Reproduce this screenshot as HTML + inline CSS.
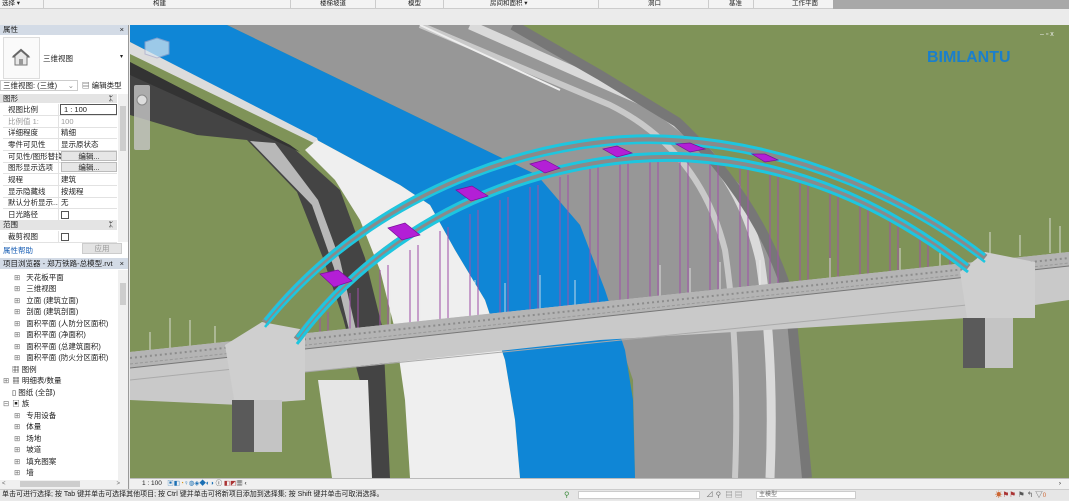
<!DOCTYPE html><html><head><meta charset="utf-8"><style>
*{margin:0;padding:0;box-sizing:border-box}
body{width:1069px;height:500px;overflow:hidden;background:#e9e9e9;font-family:"Liberation Sans","Noto Sans CJK SC",sans-serif;font-size:7.5px;color:#222;position:relative}
.a{position:absolute;white-space:nowrap}
.row{position:absolute;left:3px;width:114px;height:11.6px;border-bottom:1px solid #e2e2e2;line-height:11px}
.row span{position:absolute;left:5px}.row b{font-weight:normal;position:absolute;left:58px}
.row:after{content:"";position:absolute;left:55px;top:0;bottom:0;border-left:1px solid #e2e2e2}
.tr{position:absolute;left:14px;line-height:11px}
.tr i{font-style:normal;color:#777;margin-right:6px}
</style></head><body>
<div class="a" style="left:0;top:0;width:833px;height:9px;background:#f3f3f3;border-bottom:1px solid #ccc"></div>
<div class="a" style="left:833px;top:0;width:236px;height:9px;background:#a8a8a8"></div>
<div class="a" style="left:2px;top:0;font-size:6.5px;line-height:8px">选择 ▾</div>
<div class="a" style="left:153px;top:0;font-size:6.5px;line-height:8px">构建</div>
<div class="a" style="left:320px;top:0;font-size:6.5px;line-height:8px">楼梯坡道</div>
<div class="a" style="left:408px;top:0;font-size:6.5px;line-height:8px">模型</div>
<div class="a" style="left:490px;top:0;font-size:6.5px;line-height:8px">房间和面积 ▾</div>
<div class="a" style="left:648px;top:0;font-size:6.5px;line-height:8px">洞口</div>
<div class="a" style="left:729px;top:0;font-size:6.5px;line-height:8px">基准</div>
<div class="a" style="left:792px;top:0;font-size:6.5px;line-height:8px">工作平面</div>
<div class="a" style="left:43px;top:0;width:1px;height:9px;background:#ccc"></div>
<div class="a" style="left:290px;top:0;width:1px;height:9px;background:#ccc"></div>
<div class="a" style="left:375px;top:0;width:1px;height:9px;background:#ccc"></div>
<div class="a" style="left:443px;top:0;width:1px;height:9px;background:#ccc"></div>
<div class="a" style="left:598px;top:0;width:1px;height:9px;background:#ccc"></div>
<div class="a" style="left:708px;top:0;width:1px;height:9px;background:#ccc"></div>
<div class="a" style="left:753px;top:0;width:1px;height:9px;background:#ccc"></div>
<div class="a" style="left:0;top:9px;width:1069px;height:16px;background:#ebebeb"></div>

<div class="a" style="left:0;top:25px;width:129px;height:464px;background:#fff;border-right:1px solid #999"></div>
<div class="a" style="left:0;top:25px;width:128px;height:10px;background:#d3dbe6;line-height:10px;padding-left:3px">属性<span style="position:absolute;right:4px">×</span></div>
<div class="a" style="left:3px;top:37px;width:37px;height:42px;border:1px solid #ddd;background:#fafafa"></div>
<svg class="a" style="left:10px;top:46px" width="22" height="22" viewBox="0 0 22 22"><path d="M3 11 L11 4 L19 11 L17 11 L17 19 L5 19 L5 11 Z" fill="#e8e8e8" stroke="#777"/><path d="M3 11 L11 4 L19 11" fill="none" stroke="#666" stroke-width="2"/><rect x="9" y="13" width="4" height="6" fill="#999"/></svg>
<div class="a" style="left:43px;top:53px">三维视图</div>
<div class="a" style="left:120px;top:53px;font-size:6px">▾</div>
<div class="a" style="left:0;top:80px;width:78px;height:11px;border:1px solid #ccc;line-height:10px;padding-left:2px">三维视图: (三维)<span style="position:absolute;right:3px;color:#888">⌄</span></div>
<div class="a" style="left:82px;top:80px;line-height:11px">▤ 编辑类型</div>
<div class="a" style="left:0;top:94px;width:117px;height:9px;background:#e4e4e4;line-height:9px;padding-left:3px">图形<span style="position:absolute;right:4px">ᛯ</span></div>
<div class="row" style="top:104px"><span>视图比例</span><b style="border:1px solid #555;left:57px;width:57px;top:0;height:11px;padding-left:3px;line-height:9px">1 : 100</b></div>
<div class="row" style="top:116px;color:#999"><span>比例值 1:</span><b>100</b></div>
<div class="row" style="top:127px"><span>详细程度</span><b>精细</b></div>
<div class="row" style="top:139px"><span>零件可见性</span><b>显示原状态</b></div>
<div class="row" style="top:151px"><span>可见性/图形替换</span><b style="background:#e6e6e6;width:56px;text-align:center;border:1px solid #bbb;height:10px;line-height:9px">编辑...</b></div>
<div class="row" style="top:162px"><span>图形显示选项</span><b style="background:#e6e6e6;width:56px;text-align:center;border:1px solid #bbb;height:10px;line-height:9px">编辑...</b></div>
<div class="row" style="top:174px"><span>规程</span><b>建筑</b></div>
<div class="row" style="top:186px"><span>显示隐藏线</span><b>按规程</b></div>
<div class="row" style="top:197px"><span>默认分析显示...</span><b>无</b></div>
<div class="row" style="top:209px"><span>日光路径</span><b style="width:8px;height:8px;border:1px solid #555;top:2px"></b></div>
<div class="a" style="left:0;top:220px;width:117px;height:10px;background:#e4e4e4;line-height:10px;padding-left:3px">范围<span style="position:absolute;right:4px">ᛯ</span></div>
<div class="row" style="top:231px"><span>裁剪视图</span><b style="width:8px;height:8px;border:1px solid #555;top:2px"></b></div>
<div class="a" style="left:118px;top:94px;width:10px;height:148px;background:#f0f0f0"></div>
<div class="a" style="left:120px;top:106px;width:6px;height:45px;background:#cdcdcd"></div>
<div class="a" style="left:3px;top:245px;color:#1a5fb4">属性帮助</div>
<div class="a" style="left:82px;top:243px;width:40px;height:11px;background:#e3e3e3;border:1px solid #ccc;color:#999;text-align:center;line-height:10px">应用</div>
<div class="a" style="left:0;top:258px;width:128px;height:11px;background:#d3dbe6;line-height:11px;padding-left:3px">项目浏览器 - 郑万铁路-总模型.rvt<span style="position:absolute;right:4px">×</span></div>
<div class="tr" style="top:272px"><i>⊞</i>天花板平面</div>
<div class="tr" style="top:283px"><i>⊞</i>三维视图</div>
<div class="tr" style="top:295px"><i>⊞</i>立面 (建筑立面)</div>
<div class="tr" style="top:306px"><i>⊞</i>剖面 (建筑剖面)</div>
<div class="tr" style="top:318px"><i>⊞</i>面积平面 (人防分区面积)</div>
<div class="tr" style="top:329px"><i>⊞</i>面积平面 (净面积)</div>
<div class="tr" style="top:341px"><i>⊞</i>面积平面 (总建筑面积)</div>
<div class="tr" style="top:352px"><i>⊞</i>面积平面 (防火分区面积)</div>
<div class="tr" style="top:364px;left:12px">▦ 图例</div>
<div class="tr" style="top:375px;left:3px"><i style="margin-right:3px">⊞</i>▦ 明细表/数量</div>
<div class="tr" style="top:387px;left:12px">▯ 图纸 (全部)</div>
<div class="tr" style="top:398px;left:3px"><i style="margin-right:3px">⊟</i>▣ 族</div>
<div class="tr" style="top:410px"><i>⊞</i>专用设备</div>
<div class="tr" style="top:421px"><i>⊞</i>体量</div>
<div class="tr" style="top:433px"><i>⊞</i>场地</div>
<div class="tr" style="top:444px"><i>⊞</i>坡道</div>
<div class="tr" style="top:456px"><i>⊞</i>填充图案</div>
<div class="tr" style="top:467px"><i>⊞</i>墙</div>
<div class="a" style="left:118px;top:270px;width:10px;height:211px;background:#f0f0f0"></div>
<div class="a" style="left:120px;top:283px;width:6px;height:22px;background:#cdcdcd"></div>
<div class="a" style="left:0;top:480px;width:128px;height:9px;background:#f0f0f0;color:#666;font-size:6px;line-height:9px;padding-left:2px">&lt;<span style="position:absolute;left:20px;top:1px;width:60px;height:6px;background:#cdcdcd"></span><span style="position:absolute;right:8px">&gt;</span></div>

<svg class="a" style="left:130px;top:25px" width="939" height="453" viewBox="130 25 939 453">
<rect x="130" y="25" width="939" height="453" fill="#7f9358"/>
<polygon points="227,25 513,25 600,75 677,122 740,185 790,300 807,478 635,478 633,380 603,292 537,175" fill="#979797"/>
<path d="M420,25 L610,105 Q700,150 725,250 Q740,350 735,478" fill="none" stroke="#c9c9c9" stroke-width="6"/>
<path d="M470,25 L640,100 Q735,150 760,260 Q775,360 770,478" fill="none" stroke="#dadada" stroke-width="9"/>
<path d="M513,25 L600,75 L677,122 Q760,200 790,300 L807,478" fill="none" stroke="#777" stroke-width="10"/>
<path d="M420,25 L560,90" stroke="#eee" stroke-width="2"/>
<!-- blue river -->
<polygon points="130,25 227,25 537,175 580,225 605,290 625,350 633,400 635,478 520,478 515,420 505,360 485,300 455,250 430,205 400,185 317,140 130,42" fill="#0f86d6"/>
<!-- left bank -->
<polygon points="130,42 317,138 320,146 130,54" fill="#dcdcdc"/>
<polygon points="130,62 290,145 340,190 365,258 383,330 390,478 372,478 365,400 343,318 323,258 297,192 247,140 197,135 130,115" fill="#444"/>
<polygon points="130,62 290,145 300,152 130,75" fill="#333"/>
<polygon points="250,141 275,143 318,200 340,260 356,330 350,334 334,268 312,205" fill="#b8b8b8"/>
<polygon points="317,140 400,185 430,205 455,250 485,300 505,360 515,420 520,478 410,478 405,400 395,330 380,270 360,220 335,180 305,150" fill="#efefef"/>
<polygon points="318,380 368,380 372,478 332,478" fill="#e6e6e6"/>
<g stroke="#a052a8" stroke-width="1.2" opacity="0.85">
<path d="M320,318V335M350,293V332M380,270V328M410,250V325M440,231V322M470,214V319M500,200V316M530,187V313M560,177V309M590,169V306M620,163V303M650,159V300M680,157V297M710,158V294M740,161V290M770,166V287M800,174V284M830,185V281M860,199V278M890,215V274M920,233V271M950,254V268"/>
<path d="M328,312V334M358,288V331M388,265V327M418,245V324M448,227V321M478,210V318M508,197V315M538,185V312M568,175V308M598,167V305M628,161V302M658,158V299M688,156V296M718,158V293M748,162V289M778,168V286M808,177V283M838,188V280M868,203V277M898,219V273M928,238V270"/>
</g>
<g stroke="#eee" stroke-width="0.8">
<path d="M150,332V352M170,318V350M190,320V348M215,326V345M390,290V326M420,292V322M445,285V320M475,280V316M505,283V313M540,275V309M575,280V306M660,265V297M690,268V294M720,262V290M760,260V287M830,258V279M900,248V272M940,245V268M990,232V258M1020,235V256M1050,218V253M1060,226V254"/>
</g>
<polygon points="130,352 1069,252 1069,300 1035,305 967,318 600,340 305,372 300,400 240,405 130,400" fill="#c9c9c9"/>
<polygon points="130,352 1069,252 1069,266 130,368" fill="#b4b4b4"/>
<path d="M130,358 L1069,258" stroke="#8c8c8c" stroke-width="2" stroke-dasharray="2 3"/>
<path d="M130,364 L1069,263" stroke="#999" stroke-width="1" stroke-dasharray="3 2"/>
<path d="M130,368 L1069,266" stroke="#777" stroke-width="1"/>
<path d="M130,380 L300,362 M305,372 L967,305" stroke="#aaa" stroke-width="1"/>
<polygon points="225,345 262,322 305,330 305,400 235,405" fill="#cfcfcf"/>
<rect x="232" y="400" width="50" height="52" fill="#c4c4c4"/><rect x="232" y="400" width="22" height="52" fill="#5a5a5a"/>
<polygon points="960,272 985,252 1035,262 1035,318 967,318" fill="#cfcfcf"/>
<rect x="963" y="318" width="50" height="50" fill="#c4c4c4"/><rect x="963" y="318" width="22" height="50" fill="#5a5a5a"/>
<path d="M265,323 C380,180 560,130 680,140 C800,148 910,200 985,258" fill="none" stroke="#8a8a8a" stroke-width="8"/>
<path d="M265,320 C380,177 560,127 680,137 C800,145 910,197 985,255" fill="none" stroke="#1ec6df" stroke-width="3"/>
<path d="M265,327 C380,184 560,134 680,144 C800,152 910,204 985,262" fill="none" stroke="#1ec6df" stroke-width="2.5"/>
<path d="M297,340 C400,200 570,150 690,157 C810,165 900,215 968,268" fill="none" stroke="#8a8a8a" stroke-width="8"/>
<path d="M297,337 C400,197 570,147 690,154 C810,162 900,212 968,265" fill="none" stroke="#1ec6df" stroke-width="3"/>
<path d="M297,344 C400,204 570,154 690,161 C810,169 900,219 968,272" fill="none" stroke="#1ec6df" stroke-width="3"/>
<g fill="#b31fd6" stroke="#7a0f9a" stroke-width="0.7">
<path d="M320,274 L338,270 L352,281 L334,287 Z"/><path d="M388,228 L405,223 L420,235 L402,240 Z"/>
<path d="M456,190 L472,186 L488,196 L471,201 Z"/><path d="M530,164 L545,160 L560,168 L545,173 Z"/>
<path d="M603,149 L617,146 L632,153 L617,157 Z"/><path d="M676,144 L690,143 L705,149 L690,152 Z"/>
<path d="M752,154 L765,154 L778,160 L765,162 Z"/>
</g>
<rect x="134" y="85" width="16" height="65" rx="2" fill="#c7c7c7" opacity="0.8"/>
<circle cx="142" cy="100" r="5" fill="#ddd" stroke="#888"/>
<path d="M145,42 l12,-4 l12,4 v12 l-12,4 l-12,-4 Z" fill="#d8e6f0" opacity="0.7" stroke="#aac"/>
<text x="927" y="62" font-family="Liberation Sans" font-weight="bold" font-size="16" fill="#1a7fcc">BIMLANTU</text>
<text x="1040" y="36" font-family="Liberation Sans" font-size="7" fill="#eee">– ▫ x</text>
</svg>
<div class="a" style="left:130px;top:478px;width:939px;height:11px;background:#f0f0f0;border-top:1px solid #bbb;line-height:10px;font-size:6.5px;padding-left:12px">1 : 100 &nbsp; <span style="color:#1a6fb4">▣◧</span><span style="color:#d09010">◔</span><span style="color:#1a6fb4">♀◍◈◆◐◑</span> ⓘ <span style="color:#a33">◧◩</span>▦ ‹<span style="position:absolute;right:8px">›</span></div>
<div class="a" style="left:0;top:489px;width:1069px;height:11px;background:#e6e6e6;border-top:1px solid #ccc"></div>
<div class="a" style="left:2px;top:490px;font-size:7px;line-height:10px">单击可进行选择; 按 Tab 键并单击可选择其他项目; 按 Ctrl 键并单击可将新项目添加到选择集; 按 Shift 键并单击可取消选择。</div>
<div class="a" style="left:564px;top:490px;color:#3a8a3a;line-height:10px">⚲</div>
<div class="a" style="left:578px;top:491px;width:122px;height:8px;background:#fff;border:1px solid #ccc"></div>
<div class="a" style="left:706px;top:490px;line-height:10px;color:#777">⊿ ⚲ &nbsp;▤ ▤</div>
<div class="a" style="left:756px;top:491px;width:100px;height:8px;background:#fff;border:1px solid #ccc;font-size:6px;line-height:7px;color:#666;padding-left:2px">主模型</div>
<div class="a" style="left:995px;top:490px;line-height:10px;color:#c63">☀<span style="color:#a33">⚑⚑</span> <span style="color:#555">⚑ ↰ ▽</span><span style="font-size:6px">0</span></div>
</body></html>
